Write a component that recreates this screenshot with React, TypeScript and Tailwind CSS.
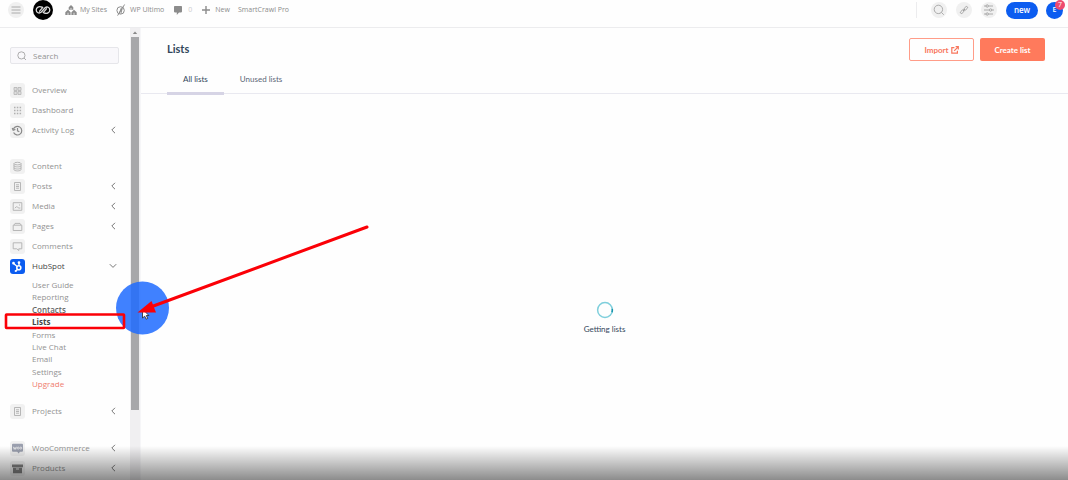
import type { ReactNode } from "react";

type IconName =
  | "overview"
  | "dashboard"
  | "history"
  | "content"
  | "doc"
  | "media"
  | "pages"
  | "comments"
  | "hubspot"
  | "woo"
  | "archive";

type Item = { label: string; icon: IconName; arrow?: boolean };

const generalItems: Item[] = [
  { label: "Overview", icon: "overview" },
  { label: "Dashboard", icon: "dashboard" },
  { label: "Activity Log", icon: "history", arrow: true },
];

const contentItems: Item[] = [
  { label: "Content", icon: "content" },
  { label: "Posts", icon: "doc", arrow: true },
  { label: "Media", icon: "media", arrow: true },
  { label: "Pages", icon: "pages", arrow: true },
  { label: "Comments", icon: "comments" },
];

const storeItems: Item[] = [
  { label: "WooCommerce", icon: "woo", arrow: true },
  { label: "Products", icon: "archive", arrow: true },
];

const hubspotLinks = [
  { label: "User Guide", style: "text-[#929292]" },
  { label: "Reporting", style: "text-[#929292]" },
  { label: "Contacts", style: "font-semibold text-[#666]" },
  { label: "Lists", style: "font-bold text-[#444]" },
  { label: "Forms", style: "text-[#929292]" },
  { label: "Live Chat", style: "text-[#929292]" },
  { label: "Email", style: "text-[#929292]" },
  { label: "Settings", style: "text-[#929292]" },
  { label: "Upgrade", style: "text-[#ef7c6e]" },
];

const glyphs: Record<IconName, ReactNode> = {
  overview: (
    <path d="M4 4.5h3v3H4zM8 4.5h3v3H8zM4 8.5h3v3H4zM8 8.5h3v3H8z" fill="#ddd" stroke="#b5b5b5" strokeWidth=".8" />
  ),
  dashboard: (
    <path
      d="M4 4.5h1.5M6.8 4.5h1.5M9.6 4.5h1.5M4 7.5h1.5M6.8 7.5h1.5M9.6 7.5h1.5M4 10.5h1.5M6.8 10.5h1.5M9.6 10.5h1.5"
      strokeWidth="1.5"
    />
  ),
  history: (
    <g stroke="#8a8a8a" strokeWidth="1.2">
      <path d="M3.4 6.2A4.3 4.3 0 1 1 3.6 9.6" />
      <path d="M2.2 5l1 2.2 2.2-.8M7.5 5v2.8l1.8 1" />
    </g>
  ),
  content: (
    <g>
      <ellipse cx="7.5" cy="4.6" rx="3.5" ry="1.3" />
      <path d="M4 4.6v6c0 1.7 7 1.7 7 0v-6M4 6.7c0 1.6 7 1.6 7 0M4 8.8c0 1.6 7 1.6 7 0" />
    </g>
  ),
  doc: <path d="M4.5 3.5h6v8h-6zM6 5.8h3M6 7.5h3M6 9.2h3" />,
  media: <path d="M3.2 3.7h8.6v7.6H3.2zM4.8 9.2q1.6-2.4 2.8-1T10.4 9M9 6h1" />,
  pages: <path d="M3.2 6.2h8.6v5.3H3.2zM4 6l1-1.6h5L11 6" />,
  comments: <path d="M3.2 3.8h8.6v6H8.8v1.8L6.8 9.8H3.2z" />,
  hubspot: (
    <g stroke="#fff" strokeWidth="1.3">
      <circle cx="8.8" cy="8.7" r="2" strokeWidth="1.6" />
      <path d="M9 6.7V4M7.2 7.4L3.6 4.4M7.5 10.3L5.8 12" />
      <circle cx="9" cy="3.6" r=".7" fill="#fff" />
      <circle cx="3.5" cy="4.2" r=".7" fill="#fff" />
      <circle cx="5.7" cy="12" r=".4" fill="#fff" />
    </g>
  ),
  woo: (
    <g>
      <path d="M3 2.8h9q1 0 1 1v6q0 1-1 1H9.8l-1 1.8-1.6-1.8H3q-1 0-1-1v-6q0-1 1-1z" fill="#9a9fae" stroke="none" />
      <path d="M3.4 5.8l.8 2.6.8-2 .7 2 .7-2.6" stroke="#eee" strokeWidth=".8" />
      <circle cx="8.2" cy="7.1" r="1" stroke="#eee" strokeWidth=".8" />
      <circle cx="10.8" cy="7.1" r="1" stroke="#eee" strokeWidth=".8" />
    </g>
  ),
  archive: (
    <path d="M2 3.5h11v2.7H2zM3 6.8h9v5.4H3zM6 7.6v.8h3v-.8z" fill="#808080" fillRule="evenodd" stroke="none" />
  ),
};

function Glyph({ name }: { name: IconName }) {
  return (
    <span
      className={`flex size-[15px] shrink-0 items-center justify-center rounded-[3px] ${
        name === "hubspot" ? "bg-[#0b5cf0]" : "bg-[#f1f1f1]"
      }`}
    >
      <svg viewBox="0 0 15 15" className="size-[15px]" fill="none" stroke="#b0b0b0" strokeWidth=".9" aria-hidden="true">
        {glyphs[name]}
      </svg>
    </span>
  );
}

function Chevron({ open }: { open?: boolean }) {
  return (
    <svg viewBox="0 0 8 8" className="size-2 shrink-0" fill="none" stroke="#777" strokeWidth="1" aria-hidden="true">
      <path d={open ? "M.8 2.2L4 5.4l3.2-3.2" : "M6 .8L2.8 4 6 7.2"} />
    </svg>
  );
}

function NavItem({ item }: { item: Item }) {
  return (
    <li>
      <a href="#" className="flex h-5 items-center gap-[7px] text-[#929292]">
        <Glyph name={item.icon} />
        <span className="flex-1">{item.label}</span>
        {item.arrow && <Chevron />}
      </a>
    </li>
  );
}

function Sidebar() {
  return (
    <nav className="w-[130px] shrink-0 overflow-hidden pt-[19px] pr-[13px] pl-[10px] text-[8px] leading-3">
      <label className="-mr-[2px] flex h-[17px] items-center gap-[6px] rounded-[2px] border border-[#e6e6ea] bg-[#f9f8fb] px-[6px]">
        <svg viewBox="0 0 10 10" className="size-[10px] shrink-0" fill="none" stroke="#999" strokeWidth=".8" aria-hidden="true">
          <circle cx="4.4" cy="4.4" r="3.6" />
          <path d="M7 7l2 2" />
        </svg>
        <input
          type="search"
          aria-label="Search"
          placeholder="Search"
          className="w-full min-w-0 bg-transparent outline-none placeholder:text-[#929292]"
        />
      </label>

      <ul className="mt-4">
        {generalItems.map((item) => (
          <NavItem key={item.label} item={item} />
        ))}
      </ul>

      <ul className="mt-4">
        {contentItems.map((item) => (
          <NavItem key={item.label} item={item} />
        ))}
        <li>
          <a href="#" className="flex h-5 items-center gap-[7px] text-[#444]">
            <Glyph name="hubspot" />
            <span className="flex-1">HubSpot</span>
            <Chevron open />
          </a>
          <ul className="mt-[3px] flex h-[111px] flex-col justify-between pl-[22px]">
            {hubspotLinks.map((link) => (
              <li key={link.label}>
                <a href="#" className={`block ${link.style}`}>
                  {link.label}
                </a>
              </li>
            ))}
          </ul>
        </li>
      </ul>

      <ul className="mt-[11px]">
        <NavItem item={{ label: "Projects", icon: "doc", arrow: true }} />
      </ul>

      <ul className="mt-[17px]">
        {storeItems.map((item) => (
          <NavItem key={item.label} item={item} />
        ))}
      </ul>
    </nav>
  );
}

function Scrollbar() {
  return (
    <div className="flex w-[11px] shrink-0 flex-col items-center border-r border-[#f6f6f8] bg-[#f0eff1]" aria-hidden="true">
      <svg viewBox="0 0 10 9" className="h-[9px] w-[10px] shrink-0">
        <path d="M5 3.5L7.2 6H2.8z" fill="#888" />
      </svg>
      <div className="h-[373px] w-2 shrink-0 bg-[#a7a7aa]" />
    </div>
  );
}

function TopBar() {
  return (
    <header className="flex h-7 shrink-0 items-center justify-between border-b border-[#ececee] pr-[5px] pb-[7px] pl-2 text-[7px] text-[#8c8c8c]">
      <div className="flex items-center">
        <button type="button" aria-label="Menu" className="flex size-4 items-center justify-center rounded-full bg-[#f0f0f0]">
          <svg viewBox="0 0 10 8" className="h-2 w-[10px]" stroke="#999" strokeWidth=".8">
            <path d="M.5 1h9M.5 4h9M.5 7h9" />
          </svg>
        </button>
        <a href="#" aria-label="Home" className="ml-[9px]">
          <svg viewBox="0 0 20 20" className="size-5" fill="none">
            <circle cx="10" cy="10" r="10" fill="#000" />
            <path
              d="M9 7.2C6 5.8 3.2 7.4 3.2 10s2.8 4 5.2 2l3.4-4c2.4-2 5-.6 5 2s-2.8 4.2-5.8 2.8M6.6 11.2l3.2-3.8M10.2 12.6l3.2-3.8"
              stroke="#ddd"
              strokeWidth="1.3"
              strokeLinecap="round"
            />
          </svg>
        </a>
        <a href="#" className="ml-3 flex items-center gap-[3px]">
          <svg viewBox="0 0 12 10" className="h-[10px] w-3" fill="#8c8c8c">
            <path d="M6 0l2.3 2.2v2.6H3.7V2.2zM3 4.8l2.6 2.4V10H.3V7.2zM9 4.8l2.7 2.4V10H6.4V7.2z" />
            <path d="M5.5 3h1v1.8h-1zM2.5 7.7h1V10h-1zM8.5 7.7h1V10h-1z" fill="#ddd" />
          </svg>
          My Sites
        </a>
        <a href="#" className="ml-[9px] flex items-center gap-1">
          <svg viewBox="0 0 10 12" className="h-3 w-[10px]" fill="none" stroke="#8c8c8c" strokeWidth="1">
            <circle cx="4.6" cy="6.4" r="3.7" />
            <path d="M8.6.5L1.6 11.6M5.4 3.8L3.4 9M6.2 4.6L4.8 9.6" />
          </svg>
          WP Ultimo
        </a>
        <a href="#" className="ml-[10px] flex items-center gap-[6px] text-[#ccc]">
          <svg viewBox="0 0 8 9" className="h-[9px] w-2" fill="#8c8c8c">
            <path d="M.8 0h6.4q.8 0 .8.8v4.8q0 .8-.8.8H5L2.8 9V6.4h-2Q0 6.4 0 5.6V.8Q0 0 .8 0z" />
          </svg>
          0
        </a>
        <a href="#" className="ml-[10px] flex items-center gap-[5px]">
          <svg viewBox="0 0 8 8" className="size-2" stroke="#8c8c8c" strokeWidth="1.4">
            <path d="M4 0v8M0 4h8" />
          </svg>
          New
        </a>
        <a href="#" className="ml-2">
          SmartCrawl Pro
        </a>
      </div>

      <div className="flex items-center">
        <span className="mr-[14px] h-4 w-px bg-[#ececee]" />
        <div className="flex gap-[9px]">
          <button type="button" aria-label="Search" className="flex size-4 items-center justify-center rounded-full bg-[#f0f0f0]">
            <svg viewBox="0 0 12 12" className="size-3" fill="none" stroke="#999" strokeWidth=".8">
              <circle cx="5.4" cy="5.4" r="4.2" />
              <path d="M8.4 8.4l2.4 2.4" />
            </svg>
          </button>
          <button type="button" aria-label="Links" className="flex size-4 items-center justify-center rounded-full bg-[#f0f0f0]">
            <svg viewBox="0 0 10 10" className="size-[10px]" fill="none" stroke="#999" strokeWidth=".9">
              <path d="M5.2 3.4L6.8 1.8q.8-.7 1.5 0t0 1.5L6.7 4.9q-.8.6-1.5 0t0-1.5M4.8 6.6L3.2 8.2q-.8.7-1.5 0t0-1.5l1.6-1.6q.8-.6 1.5 0t0 1.5M4 6l2-2" />
            </svg>
          </button>
          <button type="button" aria-label="Screen options" className="flex size-4 items-center justify-center rounded-full bg-[#f0f0f0]">
            <svg viewBox="0 0 12 12" className="size-3" fill="none" stroke="#999" strokeWidth=".8">
              <path d="M1 2h2M5.4 2H10M1 6h5M8.8 6H11M1 10h2M5.4 10H10" />
              <circle cx="4.2" cy="2" r="1.2" />
              <circle cx="7.6" cy="6" r="1.2" />
              <circle cx="4.2" cy="10" r="1.2" />
            </svg>
          </button>
        </div>
        <button type="button" className="ml-[9px] h-[17px] w-8 rounded-full bg-[#0b5cf0] text-[8px] leading-3 font-semibold text-white">
          new
        </button>
        <button type="button" aria-label="Account" className="relative ml-2 size-[17px] rounded-full bg-[#0b5cf0] text-[7px] leading-3 font-semibold text-white">
          E
          <span className="absolute -top-[2px] -right-[2px] flex size-[10px] items-center justify-center rounded-full bg-[#ee4b70] text-[7px] leading-2 font-normal">
            7
          </span>
        </button>
      </div>
    </header>
  );
}

function ListsPage() {
  return (
    <main className="flex min-w-0 flex-1 flex-col font-['Lato','Liberation_Sans',sans-serif] text-[#33475b]">
      <div className="flex items-start justify-between pt-[10px] pr-[23px] pl-[26px]">
        <h1 className="pt-[3px] text-[11px] leading-4 font-bold">Lists</h1>
        <div className="flex gap-[6px] text-[8px] leading-3 font-bold">
          <button
            type="button"
            className="flex h-[23px] w-[65px] items-center justify-center gap-[2px] rounded-[2px] border border-[#ff9c88] text-[#f8765c]"
          >
            Import
            <svg viewBox="0 0 8 8" className="size-2" fill="none" stroke="#f8765c" strokeWidth="1.2">
              <path d="M3.4 1.6H.8v5.6h5.6V4.8M4.6.7h2.7v2.7M7.1.9L3.2 4.8" />
            </svg>
          </button>
          <button type="button" className="h-[23px] w-[65px] rounded-[2px] bg-[#ff7a5c] text-white">
            Create list
          </button>
        </div>
      </div>

      <div role="tablist" className="mt-[5px] flex border-b border-[#e9e9f0] pl-[26px] text-[8px] leading-3">
        <button type="button" role="tab" aria-selected="true" className="-mb-[2px] h-[29px] border-b-3 border-[#d6d4e5] px-4">
          All lists
        </button>
        <button type="button" role="tab" aria-selected="false" className="h-[27px] px-4 pb-px text-[#5b6777]">
          Unused lists
        </button>
      </div>

      <div role="status" className="flex flex-1 flex-col items-center justify-center gap-1 pt-[62px] text-[8px] leading-3">
        <svg viewBox="0 0 18 18" className="size-[18px]" fill="none" strokeWidth="1.5">
          <circle cx="9" cy="9" r="7.4" stroke="#7fcfdc" />
          <path d="M16.3 7.8a7.4 7.4 0 0 1-.3 3.4" stroke="#1793ab" />
        </svg>
        Getting lists
      </div>
    </main>
  );
}

// Pointer highlight, red frame and arrow drawn above the page
function Annotations() {
  return (
    <svg
      viewBox="0 0 400 360"
      className="pointer-events-none absolute top-0 left-0 h-[360px] w-[400px]"
      fill="none"
      aria-hidden="true"
    >
      <circle cx="142.5" cy="308" r="26.5" fill="#1f6bff" fillOpacity=".85" />
      <path d="M142.5 309v9l2.2-1.8 1.5 3 1.5-.8-1.4-2.9h2.6z" fill="#fff" stroke="#222" strokeWidth=".8" />
      <rect x="6" y="314.5" width="118" height="13.5" rx=".5" stroke="#fb0007" strokeWidth="2.6" />
      <path d="M367 227L152 306.5" stroke="#fb0007" strokeWidth="3" strokeLinecap="round" />
      <path d="M137.5 312.5L151.5 301l4.5 11.5z" fill="#fb0007" />
    </svg>
  );
}

export default function App() {
  return (
    <div className="relative flex h-screen flex-col overflow-hidden bg-[#fefefe] font-['Open_Sans','Liberation_Sans',sans-serif]">
      <TopBar />
      <div className="flex min-h-0 flex-1">
        <Sidebar />
        <Scrollbar />
        <ListsPage />
      </div>
      <Annotations />
      <div className="pointer-events-none absolute inset-x-0 bottom-0 h-[34px] bg-linear-to-b from-transparent to-black/45" />
    </div>
  );
}
